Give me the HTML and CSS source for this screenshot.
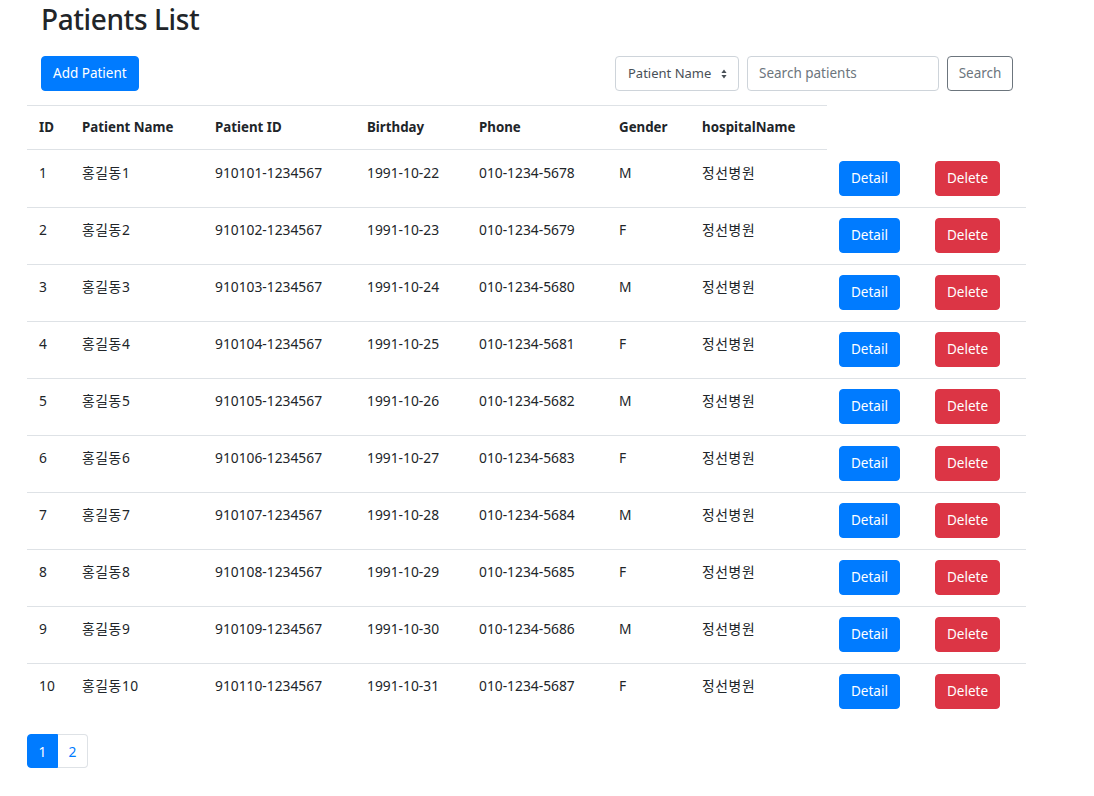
FILE: index.html
```html
<!DOCTYPE html>
<html lang="ko">
<head>
<meta charset="utf-8">
<title>Patients List</title>
<link rel="stylesheet" href="styles.css">
</head>
<body>
<div class="page">
  <h2 class="title">Patients List</h2>
  <div class="toolbar">
    <button class="btn btn-primary">Add Patient</button>
    <div class="search">
      <div class="select">Patient Name
        <svg class="caret" width="6" height="10" viewBox="0 0 6 10"><path d="M3 0.5L5.6 4H0.4z M3 9.5L0.4 6H5.6z" fill="#495057"/></svg>
      </div>
      <div class="input">Search patients</div>
      <button class="btn btn-outline">Search</button>
    </div>
  </div>
  <table class="table">
    <colgroup>
      <col style="width:43px"><col style="width:133px"><col style="width:152px"><col style="width:112px"><col style="width:140px"><col style="width:83px"><col style="width:137px"><col style="width:96px"><col style="width:103px">
    </colgroup>
    <thead>
      <tr><th>ID</th><th>Patient Name</th><th>Patient ID</th><th>Birthday</th><th>Phone</th><th>Gender</th><th>hospitalName</th></tr>
    </thead>
    <tbody>
      <tr><td>1</td><td class="ko">홍길동1</td><td>910101-1234567</td><td>1991-10-22</td><td>010-1234-5678</td><td>M</td><td class="ko">정선병원</td><td><button class="btn btn-primary">Detail</button></td><td><button class="btn btn-danger">Delete</button></td></tr>
      <tr><td>2</td><td class="ko">홍길동2</td><td>910102-1234567</td><td>1991-10-23</td><td>010-1234-5679</td><td>F</td><td class="ko">정선병원</td><td><button class="btn btn-primary">Detail</button></td><td><button class="btn btn-danger">Delete</button></td></tr>
      <tr><td>3</td><td class="ko">홍길동3</td><td>910103-1234567</td><td>1991-10-24</td><td>010-1234-5680</td><td>M</td><td class="ko">정선병원</td><td><button class="btn btn-primary">Detail</button></td><td><button class="btn btn-danger">Delete</button></td></tr>
      <tr><td>4</td><td class="ko">홍길동4</td><td>910104-1234567</td><td>1991-10-25</td><td>010-1234-5681</td><td>F</td><td class="ko">정선병원</td><td><button class="btn btn-primary">Detail</button></td><td><button class="btn btn-danger">Delete</button></td></tr>
      <tr><td>5</td><td class="ko">홍길동5</td><td>910105-1234567</td><td>1991-10-26</td><td>010-1234-5682</td><td>M</td><td class="ko">정선병원</td><td><button class="btn btn-primary">Detail</button></td><td><button class="btn btn-danger">Delete</button></td></tr>
      <tr><td>6</td><td class="ko">홍길동6</td><td>910106-1234567</td><td>1991-10-27</td><td>010-1234-5683</td><td>F</td><td class="ko">정선병원</td><td><button class="btn btn-primary">Detail</button></td><td><button class="btn btn-danger">Delete</button></td></tr>
      <tr><td>7</td><td class="ko">홍길동7</td><td>910107-1234567</td><td>1991-10-28</td><td>010-1234-5684</td><td>M</td><td class="ko">정선병원</td><td><button class="btn btn-primary">Detail</button></td><td><button class="btn btn-danger">Delete</button></td></tr>
      <tr><td>8</td><td class="ko">홍길동8</td><td>910108-1234567</td><td>1991-10-29</td><td>010-1234-5685</td><td>F</td><td class="ko">정선병원</td><td><button class="btn btn-primary">Detail</button></td><td><button class="btn btn-danger">Delete</button></td></tr>
      <tr><td>9</td><td class="ko">홍길동9</td><td>910109-1234567</td><td>1991-10-30</td><td>010-1234-5686</td><td>M</td><td class="ko">정선병원</td><td><button class="btn btn-primary">Detail</button></td><td><button class="btn btn-danger">Delete</button></td></tr>
      <tr><td>10</td><td class="ko">홍길동10</td><td>910110-1234567</td><td>1991-10-31</td><td>010-1234-5687</td><td>F</td><td class="ko">정선병원</td><td><button class="btn btn-primary">Detail</button></td><td><button class="btn btn-danger">Delete</button></td></tr>
    </tbody>
  </table>
  <ul class="pagination">
    <li class="page-item active">1</li>
    <li class="page-item">2</li>
  </ul>
</div>
</body>
</html>
```
FILE: styles.css
```css
* { box-sizing: border-box; }
html, body { margin: 0; padding: 0; background: #fff; }
body {
  font-family: "Noto Sans", "Noto Sans CJK KR", sans-serif;
  font-size: 13.8px;
  line-height: 21px;
  color: #212529;
}
.page { padding: 0 0 0 27px; }
.title {
  margin: 0 0 0 14px;
  font-size: 28px;
  font-weight: 500;
  letter-spacing: -0.4px;
  line-height: 38px;
  height: 38px;
}
.toolbar {
  display: flex;
  justify-content: space-between;
  align-items: center;
  margin: 18px 0 0 14px;
  width: 972px;
}
.search { display: flex; gap: 8px; }
.btn {
  display: inline-block;
  font-family: inherit;
  font-size: 13.5px;
  line-height: 21px;
  height: 35px;
  padding: 6px 11px;
  border: 1px solid transparent;
  border-radius: 4px;
  color: #fff;
  cursor: pointer;
  vertical-align: top;
}
.table .btn { margin: -1px 0 1px; }
.btn-primary { background: #007bff; border-color: #007bff; }
.btn-danger { background: #dc3545; border-color: #dc3545; }
.btn-outline { background: #fff; border-color: #6c757d; color: #6c757d; width: 66px; padding: 6px 0; text-align: center; }
.select {
  width: 124px;
  height: 35px;
  padding: 6px 11px 6px 12px;
  border: 1px solid #ced4da;
  border-radius: 4px;
  color: #495057;
  font-size: 13px;
  display: flex;
  align-items: center;
  justify-content: space-between;
}
.caret { flex: none; }
.input {
  width: 192px;
  height: 35px;
  padding: 6px 11px;
  border: 1px solid #ced4da;
  border-radius: 4px;
  color: #6c757d;
  font-size: 13.5px;
}
.table {
  margin-top: 14px;
  border-collapse: separate;
  border-spacing: 0;
  table-layout: fixed;
  width: 999px;
}
.table th, .table td {
  text-align: left;
  vertical-align: top;
  padding: 11px 12px 10px;
  border-top: 1px solid #dee2e6;
  white-space: nowrap;
}
.table td.ko { letter-spacing: 0.6px; }
.table th { font-weight: 700; font-size: 13.3px; border-bottom: 1px solid #dee2e6; padding-bottom: 11px; }
.table tbody tr:first-child td { border-top: none; padding-top: 12px; }
.pagination {
  list-style: none;
  margin: 14px 0 0;
  padding: 0;
  display: flex;
}
.page-item {
  height: 34px;
  line-height: 20px;
  padding: 7px 0;
  border: 1px solid #dee2e6;
  color: #007bff;
  width: 31px;
  text-align: center;
}
.page-item.active { background: #007bff; border-color: #007bff; color: #fff; border-radius: 4px 0 0 4px; }
.page-item:last-child { border-left: none; border-radius: 0 4px 4px 0; width: 30px; }
```
